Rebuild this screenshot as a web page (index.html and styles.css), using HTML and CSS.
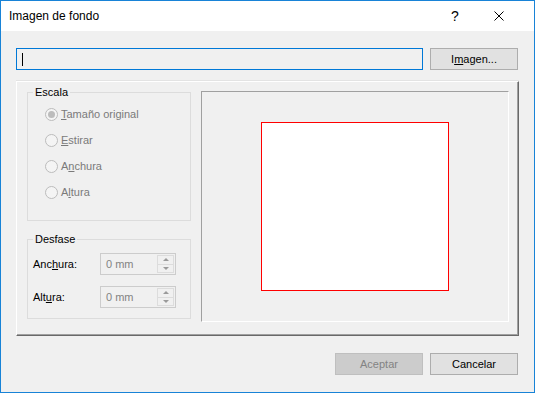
FILE: index.html
```html
<!DOCTYPE html>
<html lang="es">
<head>
    <meta charset="UTF-8">
    <meta name="viewport" content="width=device-width, initial-scale=1.0">
    <title>Imagen de fondo</title>
    <link rel="stylesheet" href="styles.css">
</head>
<body>
    <div class="dialog">
        <div class="titlebar">
            <span class="title">Imagen de fondo</span>
            <span class="help">?</span>
            <span class="close">
                <svg width="10" height="10" viewBox="0 0 10 10"><path d="M0.5 0.5L9.5 9.5M9.5 0.5L0.5 9.5" stroke="#000" stroke-width="1" fill="none"/></svg>
            </span>
        </div>

        <div class="content">
            <div class="file-row">
                <div class="path-input"><span class="caret"></span></div>
                <button class="btn">I<u>m</u>agen...</button>
            </div>

            <div class="panel">
                <div class="options">
                    <fieldset class="group scale">
                        <legend>Escala</legend>
                        <div class="radio-list">
                            <div class="radio-row"><span class="radio checked"></span><span><u>T</u>amaño original</span></div>
                            <div class="radio-row"><span class="radio"></span><span><u>E</u>stirar</span></div>
                            <div class="radio-row"><span class="radio"></span><span>A<u>n</u>chura</span></div>
                            <div class="radio-row"><span class="radio"></span><span>A<u>l</u>tura</span></div>
                        </div>
                    </fieldset>

                    <fieldset class="group offset">
                        <legend>Desfase</legend>
                        <div class="spin-list">
                            <div class="spin-row">
                                <span class="spin-label">Anc<u>h</u>ura:</span>
                                <div class="spin">
                                    <span class="spin-value">0 mm</span>
                                    <span class="spin-btns"><span class="spin-up"></span><span class="spin-down"></span></span>
                                </div>
                            </div>
                            <div class="spin-row">
                                <span class="spin-label">Alt<u>u</u>ra:</span>
                                <div class="spin">
                                    <span class="spin-value">0 mm</span>
                                    <span class="spin-btns"><span class="spin-up"></span><span class="spin-down"></span></span>
                                </div>
                            </div>
                        </div>
                    </fieldset>
                </div>

                <div class="preview">
                    <div class="preview-page"></div>
                </div>
            </div>

            <div class="footer">
                <button class="btn" disabled>Aceptar</button>
                <button class="btn">Cancelar</button>
            </div>
        </div>
    </div>
</body>
</html>
```

FILE: styles.css
```css
body {
    margin: 0;
    background: #f0f0f0;
    font-family: 'Liberation Sans', Arial, sans-serif;
    font-size: 11px;
    color: #000;
}

.dialog {
    width: 535px;
    height: 393px;
    box-sizing: border-box;
    border: 1px solid #1883d7;
    background: #f0f0f0;
    overflow: hidden;
}

.titlebar {
    height: 30px;
    background: #fff;
    display: flex;
    align-items: center;
    padding: 0 30px 0 8px;
}

.title {
    flex: 1;
    font-size: 12px;
}

.help {
    width: 14px;
    text-align: center;
    font-size: 14px;
}

.close {
    margin-left: 32px;
    width: 10px;
    height: 10px;
    display: flex;
}

.content {
    padding: 17px 16px 0 15px;
}

.file-row {
    display: flex;
    gap: 7px;
}

.path-input {
    width: 407px;
    height: 22px;
    box-sizing: border-box;
    border: 1px solid #0078d7;
    background: #f0f0f0;
    display: flex;
    align-items: center;
}

.caret {
    width: 1px;
    height: 13px;
    margin-left: 5px;
    background: #000;
}

.btn {
    width: 88px;
    height: 22px;
    box-sizing: border-box;
    border: 1px solid #adadad;
    background: #e1e1e1;
    font: inherit;
    color: #000;
    padding: 0;
}

.btn:disabled {
    background: #cccccc;
    border-color: #bfbfbf;
    color: #838383;
}

.panel {
    width: 503px;
    height: 255px;
    box-sizing: border-box;
    margin-top: 11px;
    border: 1px solid;
    border-color: #fff #696969 #696969 #fff;
    box-shadow: inset -1px -1px #a0a0a0, 0 -1px #e3e3e3;
    padding: 3px 9px 0 10px;
    display: flex;
    gap: 10px;
    align-items: flex-start;
}

.options {
    width: 164px;
    display: flex;
    flex-direction: column;
}

.group {
    margin: 0;
    padding: 0;
    min-width: 0;
    border: 1px solid #dcdcdc;
    box-sizing: border-box;
}

.group legend {
    margin-left: 5px;
    padding: 0 2px;
    line-height: 14px;
}

.scale {
    height: 136px;
}

.offset {
    height: 87px;
    margin-top: 11px;
}

.radio-list {
    padding: 2px 0 0 17px;
    color: #7a7a7a;
}

.radio-row {
    height: 26px;
    display: flex;
    align-items: center;
    gap: 3px;
}

.radio {
    width: 13px;
    height: 13px;
    box-sizing: border-box;
    border: 1px solid #bcbcbc;
    border-radius: 50%;
    background: #f4f4f4;
    display: flex;
    align-items: center;
    justify-content: center;
}

.radio.checked::after {
    content: '';
    width: 7px;
    height: 7px;
    border-radius: 50%;
    background: #bcbcbc;
}

.spin-list {
    padding: 7px 0 0 5px;
    display: flex;
    flex-direction: column;
    gap: 11px;
}

.spin-row {
    display: flex;
    align-items: center;
}

.spin-label {
    width: 67px;
}

.spin {
    width: 76px;
    height: 22px;
    box-sizing: border-box;
    border: 1px solid #cccccc;
    background: #f0f0f0;
    display: flex;
}

.spin-value {
    flex: 1;
    padding-left: 5px;
    line-height: 20px;
    color: #838383;
}

.spin-btns {
    width: 17px;
    display: flex;
    flex-direction: column;
    padding: 1px 1px 1px 0;
}

.spin-up,
.spin-down {
    flex: 1;
    border: 1px solid #dcdcdc;
    display: flex;
    align-items: center;
    justify-content: center;
}

.spin-down {
    border-top: none;
}

.spin-up::before,
.spin-down::before {
    content: '';
    border-left: 3px solid transparent;
    border-right: 3px solid transparent;
}

.spin-up::before {
    border-bottom: 3px solid #9a9a9a;
}

.spin-down::before {
    border-top: 3px solid #9a9a9a;
}

.preview {
    width: 308px;
    height: 231px;
    box-sizing: border-box;
    margin-top: 6px;
    border: 1px solid;
    border-color: #a0a0a0 #fff #fff #a0a0a0;
    display: flex;
    align-items: center;
    justify-content: center;
}

.preview-page {
    width: 188px;
    height: 169px;
    box-sizing: border-box;
    border: 1px solid #ff0000;
    background: #fff;
}

.footer {
    margin-top: 17px;
    display: flex;
    justify-content: flex-end;
    gap: 7px;
}
```
